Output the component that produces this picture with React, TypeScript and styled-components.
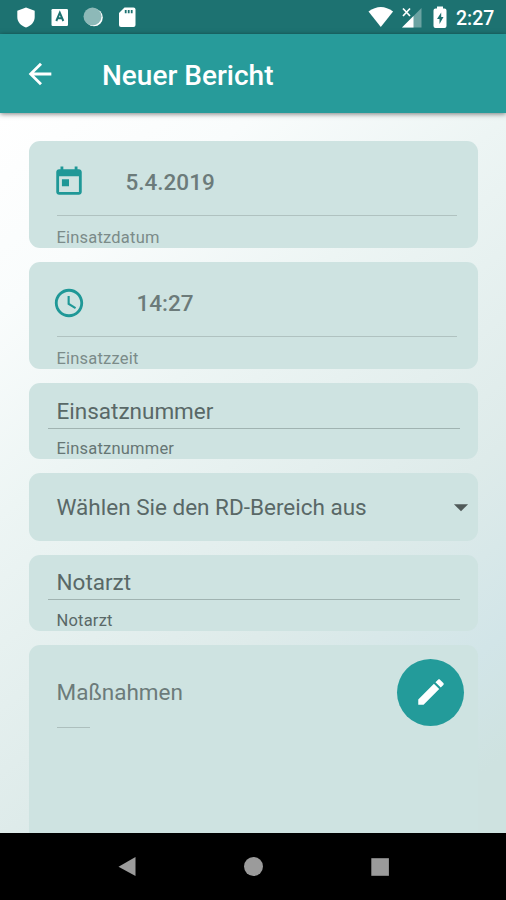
import React from "react";
import styled, { createGlobalStyle } from "styled-components";

const Global = createGlobalStyle`
  * { box-sizing: border-box; }
  body { margin: 0; font-family: Roboto, "Liberation Sans", sans-serif; }
`;

const Screen = styled.div`
  width: 506px;
  height: 900px;
  display: flex;
  flex-direction: column;
  overflow: hidden;
`;

const StatusBar = styled.header`
  flex: 0 0 34px;
  display: flex;
  justify-content: space-between;
  background: #1d7271;
  color: #fff;
`;

const StatusIcons = styled.svg`
  display: block;
  height: 34px;
`;

const StatusRight = styled.div`
  display: flex;
  padding-right: 11px;
`;

const Clock = styled.span`
  width: 39px;
  padding-top: 3px;
  font-size: 19.5px;
  font-weight: 500;
  line-height: 31px;
  white-space: nowrap;
`;

const AppBar = styled.div`
  flex: 0 0 79px;
  display: flex;
  align-items: center;
  padding-left: 23px;
  background: #279b9a;
  color: #fff;
  box-shadow: 0 1px 5px rgba(0, 0, 0, 0.5);
  z-index: 1;
`;

const Title = styled.h1`
  margin: 4px 0 0 45px;
  font-size: 28px;
  font-weight: 500;
  line-height: 34px;
`;

const Icon = styled.svg`
  display: block;
  width: 34px;
  height: 34px;
  flex: none;
  fill: currentColor;
`;

const Form = styled.main`
  flex: 1;
  min-height: 0;
  overflow: hidden;
  display: flex;
  flex-direction: column;
  gap: 14px;
  padding: 28px 28px 0 28.5px;
  background: linear-gradient(142deg, #ffffff 0%, #f9fcfc 18%, #edf5f4 36%, #deebea 65%, #d2e5e8 82%, #cee2e0 93%);
`;

const Card = styled.section<{ $height: number }>`
  flex: 0 0 ${(p) => p.$height}px;
  display: flex;
  flex-direction: column;
  border-radius: 11px;
  background: #cee3e1;
  overflow: hidden;
`;

const PickerRow = styled.div<{ $gap: number }>`
  display: flex;
  align-items: center;
  gap: ${(p) => p.$gap}px;
  height: 76px;
  margin: 0 21px 0 28px;
  padding: 7px 0 0;
  border-bottom: 1px solid #b0c2c0;
  color: #1f9897;
  svg { margin-left: -4.500px; }
`;

const Value = styled.span`
  font-size: 22.5px;
  font-weight: 500;
  line-height: 28px;
  color: #6c7b7a;
`;

const InputRow = styled.div<{ $height: number }>`
  height: ${(p) => p.$height}px;
  margin: 0 18px 0 19px;
  padding: ${(p) => p.$height - 32}px 0 0 9px;
  border-bottom: 1.5px solid #a0b3b1;
`;

const Text = styled.span<{ $color?: string }>`
  display: block;
  font-size: 22.5px;
  line-height: 28px;
  white-space: nowrap;
  color: ${(p) => p.$color ?? "#596867"};
`;

const Helper = styled.span<{ $top: number; $color?: string }>`
  display: block;
  margin: ${(p) => p.$top}px 0 0 28px;
  font-size: 16.5px;
  line-height: 20px;
  letter-spacing: 0.2px;
  color: ${(p) => p.$color ?? "#7b8b89"};
`;

const SelectRow = styled.div`
  display: flex;
  align-items: center;
  justify-content: space-between;
  height: 67px;
  padding: 0 0 0 28px;
  color: #505a59;
`;

const ActionRow = styled.div`
  display: flex;
  align-items: center;
  justify-content: space-between;
  padding: 14px 14px 0 28px;
`;

const EditButton = styled.button`
  width: 67px;
  height: 67px;
  display: flex;
  align-items: center;
  justify-content: center;
  padding: 0;
  border: 0;
  border-radius: 50%;
  background: #239b9a;
  color: #fff;
`;

const ShortLine = styled.div`
  width: 33px;
  height: 1px;
  margin: 1px 0 0 28px;
  background: #adbfbd;
`;

const NavBar = styled.nav`
  flex: 0 0 67px;
  display: flex;
  background: #000;
`;

export default function App() {
  return (
    <Screen>
      <Global />
      <StatusBar>
        <StatusIcons width="150" viewBox="0 0 150 34" fill="#fff">
          <path d="M26 7.500l8.700 3.200v6.300c0 5-3.500 8.700-8.700 10.500-5.200-1.800-8.700-5.500-8.700-10.500v-6.300z" />
          <rect x="51.500" y="9" width="16.500" height="17" rx="1.200" />
          <path d="M56.300 21l3.500-8.300 3.500 8.300M57.500 18.300h4.600" fill="none" stroke="#1d7271" strokeWidth="2" />
          <circle cx="94" cy="17.500" r="8.800" />
          <circle cx="92.500" cy="16.500" r="9" fill="#8db9b8" />
          <path d="M124.500 7.500h9q2 0 2 2v15.500q0 2-2 2h-12.500q-2 0-2-2v-12z" />
          <path d="M125.700 10v3.300M128.700 10v3.300M131.700 10v3.300" stroke="#1d7271" strokeWidth="1.800" />
        </StatusIcons>
        <StatusRight>
          <StatusIcons width="88" viewBox="368 0 88 34" fill="#fff">
            <path d="M368.500 11.500q12.300-9 24.600 0l-12.300 15.500z" />
            <path d="M421.500 8v19.500h-19.500z" opacity=".35" />
            <path d="M413.500 16v11.500h-11.500z" />
            <path d="M403 8.500l7 7.500M410 8.500l-7 7.500" stroke="#fff" strokeWidth="1.700" />
            <path d="M437 6.500h6v2h1.500q2 0 2 2v15.500q0 2-2 2h-9q-2 0-2-2v-15.500q0-2 2-2h1.500z" />
            <path d="M441.200 12.500l-4.200 6.500h2.500v5l4-7h-2.300z" fill="#1d7271" />
          </StatusIcons>
          <Clock>2:27</Clock>
        </StatusRight>
      </StatusBar>
      <AppBar>
        <Icon viewBox="0 0 24 24">
          <path d="M20 11H7.830l5.590-5.590L12 4l-8 8 8 8 1.410-1.410L7.830 13H20v-2z" />
        </Icon>
        <Title>Neuer Bericht</Title>
      </AppBar>
      <Form>
        <Card $height={107.3}>
          <PickerRow $gap={39.500}>
            <Icon viewBox="0 0 24 24">
              <path d="M19 3h-1V1h-2v2H8V1H6v2H5c-1.110 0-1.990.9-1.990 2L3 19c0 1.100.89 2 2 2h14c1.100 0 2-.9 2-2V5c0-1.100-.9-2-2-2zm0 16H5V8h14v11zM7 10h5v5H7v-5z" />
            </Icon>
            <Value>5.4.2019</Value>
          </PickerRow>
          <Helper $top={12}>Einsatzdatum</Helper>
        </Card>
        <Card $height={107.2}>
          <PickerRow $gap={50.500}>
            <Icon viewBox="0 0 24 24">
              <path d="M11.990 2C6.470 2 2 6.480 2 12s4.470 10 9.990 10C17.520 22 22 17.520 22 12S17.520 2 11.990 2zM12 20c-4.420 0-8-3.580-8-8s3.580-8 8-8 8 3.580 8 8-3.580 8-8 8z" />
              <path d="M12.500 7H11v6l5.250 3.150.75-1.230-4.500-2.670z" />
            </Icon>
            <Value>14:27</Value>
          </PickerRow>
          <Helper $top={12.500}>Einsatzzeit</Helper>
        </Card>
        <Card $height={75.700}>
          <InputRow $height={46}><Text>Einsatznummer</Text></InputRow>
          <Helper $top={10.500} $color="#667674">Einsatznummer</Helper>
        </Card>
        <Card $height={67.500}>
          <SelectRow>
            <Text>Wählen Sie den RD-Bereich aus</Text>
            <Icon viewBox="0 0 24 24"><path d="M7 10l5 5 5-5z" /></Icon>
          </SelectRow>
        </Card>
        <Card $height={76}>
          <InputRow $height={45}><Text>Notarzt</Text></InputRow>
          <Helper $top={11} $color="#596867">Notarzt</Helper>
        </Card>
        <Card $height={220}>
          <ActionRow>
            <Text $color="#6c7b7a">Maßnahmen</Text>
            <EditButton aria-label="Maßnahmen bearbeiten">
              <Icon viewBox="0 0 24 24">
                <path d="M3 17.250V21h3.750L17.810 9.940l-3.750-3.750L3 17.250zM20.710 7.040c.39-.39.39-1.020 0-1.410l-2.340-2.340c-.39-.39-1.020-.39-1.410 0l-1.830 1.830 3.750 3.750 1.830-1.830z" />
              </Icon>
            </EditButton>
          </ActionRow>
          <ShortLine />
        </Card>
      </Form>
      <NavBar>
        <svg width="506" height="67" viewBox="0 833 506 67" fill="#9b9b9b">
          <path d="M118.500 866.700L135.500 857v19z" />
          <circle cx="253.500" cy="866.500" r="9.500" />
          <rect x="371.300" y="858.200" width="17.600" height="17.600" />
        </svg>
      </NavBar>
    </Screen>
  );
}
